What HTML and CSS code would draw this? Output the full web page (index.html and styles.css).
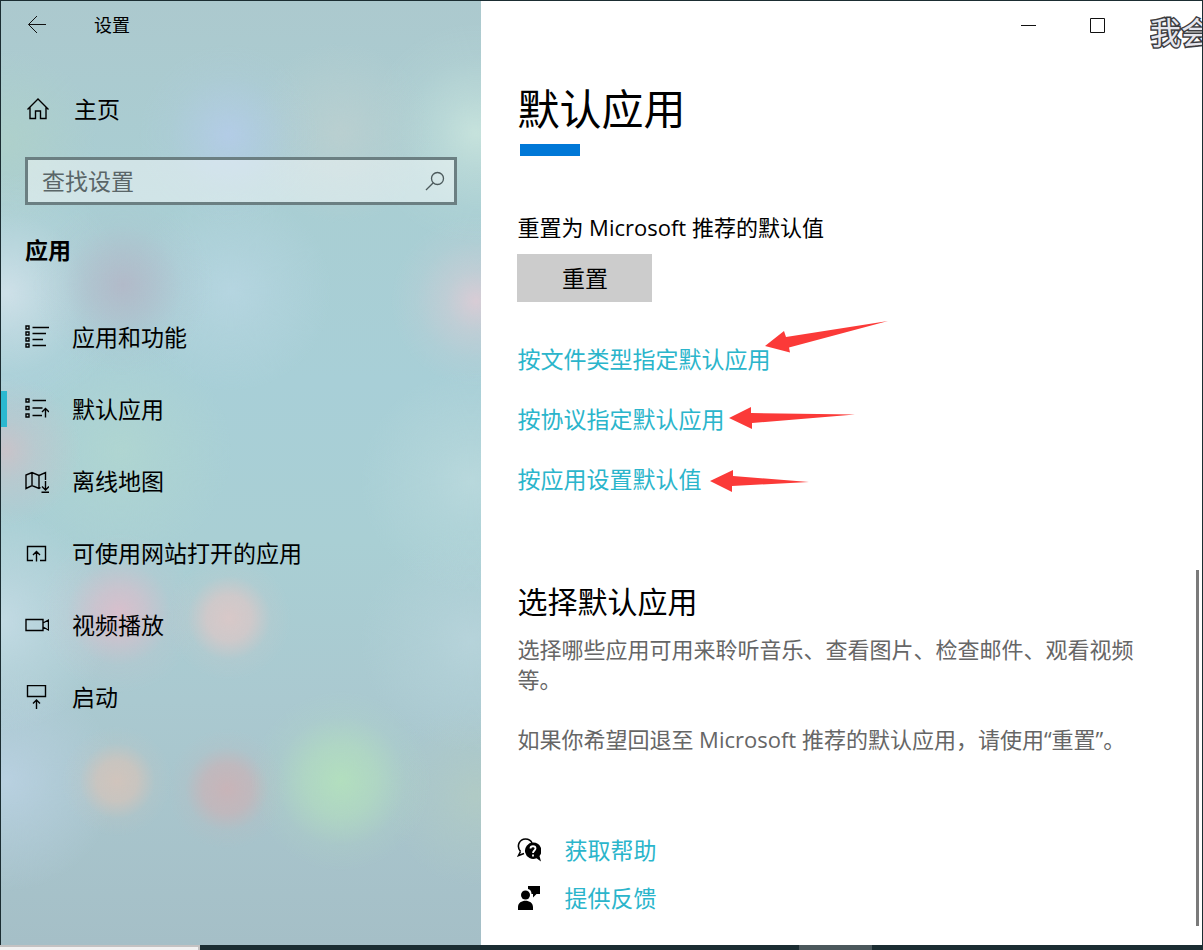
FILE: index.html
```html
<!DOCTYPE html>
<html lang="zh-CN">

<head>
    <meta charset="UTF-8">
    <meta name="viewport" content="width=device-width, initial-scale=1.0">
    <title>设置</title>
    <link rel="stylesheet" href="styles.css">
</head>

<body>
    <div class="window">
        <aside class="sidebar">
            <header class="caption">
                <button class="back" type="button" aria-label="返回">
                    <svg width="20" height="20" viewBox="0 0 20 20"><path d="M19 9.500H1.500M10 1L1.500 9.500L10 18"/></svg>
                </button>
                <span class="app-name">设置</span>
            </header>

            <a class="home" href="#">
                <svg class="icon" width="24" height="24" viewBox="0 0 24 24"><path d="M1.500 12.500L12 2L22.500 12.500M4 10.500V21.500H9.500V14H14.500V21.500H20V10.500"/></svg>
                主页
            </a>

            <form class="search">
                <input type="text" id="searchInput" aria-label="查找设置" placeholder="查找设置">
                <button type="button" aria-label="搜索">
                    <svg width="20" height="20" viewBox="0 0 20 20"><circle cx="12.500" cy="7.500" r="6"/><path d="M8.300 11.700L1 19"/></svg>
                </button>
            </form>

            <h2 class="group-title">应用</h2>

            <nav>
                <ul class="nav-list">
                    <li><a href="#">
                        <svg class="icon" width="24" height="24" viewBox="0 0 24 24"><path d="M1 1h3v3h-3zM1 7h3v3h-3zM1 13h3v3h-3zM1 19h3v3h-3zM7.500 2.500H24M7.500 8.500H21M7.500 14.500H18M7.500 20.500H21"/></svg>
                        应用和功能</a></li>
                    <li><a class="active" href="#">
                        <svg class="icon" width="24" height="24" viewBox="0 0 24 24"><path d="M1 2h3v3h-3zM1 9.500h3v3h-3zM1 17h3v3h-3zM7.500 3.500H21M7.500 11H17.500M7.500 18.500H17M20.500 20.500V11.500M17 15L20.500 11.500L24 15"/></svg>
                        默认应用</a></li>
                    <li><a href="#">
                        <svg class="icon" width="24" height="24" viewBox="0 0 24 24"><path d="M15.500 18.500L14 19.500L7 16.500L1 19.500V6L7 3.500L14 6.500L20.500 3.500V11M7 3.500V16.500M14 6.500V19.500M20.500 12V20.500M17 17.500L20.500 21L24 17.500M16.500 23.300H24"/></svg>
                        离线地图</a></li>
                    <li><a href="#">
                        <svg class="icon" width="24" height="24" viewBox="0 0 24 24"><path d="M8 19.500H2.500V5.500H20.500V19.500H15M11.500 20.500V10.500M8 14L11.500 10.500L15 14"/></svg>
                        可使用网站打开的应用</a></li>
                    <li><a href="#">
                        <svg class="icon" width="24" height="24" viewBox="0 0 24 24"><path d="M1 6.500H18V17.500H1zM18 10L23.500 7V17L18 14"/></svg>
                        视频播放</a></li>
                    <li><a href="#">
                        <svg class="icon" width="24" height="24" viewBox="0 0 24 24"><path d="M2.500 0.500H20.500V11.500H2.500zM11.500 24V15M8 18.500L11.500 15L15 18.500"/></svg>
                        启动</a></li>
                </ul>
            </nav>
        </aside>

        <main class="content">
            <div class="window-buttons">
                <button type="button" aria-label="最小化">
                    <svg width="16" height="16" viewBox="0 0 16 16"><path d="M0 8.500H15"/></svg>
                </button>
                <button type="button" aria-label="最大化">
                    <svg width="16" height="16" viewBox="0 0 16 16"><path d="M.500 1.500H14.500V15.500H.500z"/></svg>
                </button>
                <button type="button" aria-label="关闭"></button>
            </div>

            <h1>默认应用</h1>
            <div class="title-bar"></div>

            <section class="reset">
                <p>重置为 Microsoft 推荐的默认值</p>
                <button type="button">重置</button>
            </section>

            <ul class="links">
                <li>
                    <a href="#">按文件类型指定默认应用</a>
                    <svg class="arrow arrow-type" width="124" height="32" viewBox="0 0 124 32"><path d="M0 25L19 10L21 16L123 0L24 26.500L25 31.500z"/></svg>
                </li>
                <li>
                    <a href="#">按协议指定默认应用</a>
                    <svg class="arrow arrow-protocol" width="126" height="22" viewBox="0 0 126 22"><path d="M0 11L22 0V6L126 7.500L23 16V22z"/></svg>
                </li>
                <li>
                    <a href="#">按应用设置默认值</a>
                    <svg class="arrow arrow-app" width="100" height="22" viewBox="0 0 100 22"><path d="M0 11L23 0V6L99 12L22 16V22z"/></svg>
                </li>
            </ul>

            <section class="choose">
                <h2>选择默认应用</h2>
                <p>选择哪些应用可用来聆听音乐、查看图片、检查邮件、观看视频等。</p>
                <p>如果你希望回退至 Microsoft 推荐的默认应用，请使用“重置”。</p>
            </section>

            <ul class="support">
                <li>
                    <svg width="24" height="24" viewBox="0 0 24 24">
                        <path class="line" d="M3.500 13.500C-1 8 2.500 1 8.500 1C11.500 1 14 2.500 15 5M3.500 13.500L1.500 17.500L7 15.500"/>
                        <path d="M16 4.500A8.200 8.200 0 1 0 19.500 20.200L24 23.500L22.500 18A8.200 8.200 0 0 0 16 4.500z"/>
                        <path class="mark" d="M13.500 10.500C13.500 7.500 18.500 7.500 18.500 10.500C18.500 12.500 16 12.500 16 15M16 16.500V18.500"/>
                    </svg>
                    <a href="#">获取帮助</a>
                </li>
                <li>
                    <svg width="24" height="24" viewBox="0 0 24 24">
                        <circle cx="8.500" cy="9" r="4.500"/>
                        <path d="M1 24V21C1 12.500 16 12.500 16 21V24zM11 0H23V8H19.500L16 11.500V8H14.500C14.500 5 13 3.500 11 3z"/>
                    </svg>
                    <a href="#">提供反馈</a>
                </li>
            </ul>

            <div class="scrollbar"></div>
        </main>
        <div class="watermark">我会</div>
    </div>

    <footer class="taskbar">
        <div class="task-light"></div>
        <div class="task-active"></div>
    </footer>
</body>

</html>
```
FILE: styles.css
```css
* {
    box-sizing: border-box;
}

body {
    margin: 0;
    min-height: 100vh;
    display: flex;
    flex-direction: column;
    background-color: #1b2d32;
    font-family: "Open Sans", "Noto Sans CJK SC", sans-serif;
    font-size: 23px;
    line-height: 30px;
    color: #000000;
    overflow-x: hidden;
}

h1,
h2,
p,
ul {
    margin: 0;
    padding: 0;
    font-weight: normal;
}

ul {
    list-style: none;
}

a {
    color: #2bb5cb;
    text-decoration: none;
}

button {
    padding: 0;
    border: none;
    background: none;
    font: inherit;
    color: inherit;
}

svg {
    display: block;
    flex-shrink: 0;
}

.window {
    position: relative;
    flex: 1;
    display: flex;
    margin: 1px 1px 0;
    background-color: #ffffff;
}

/* sidebar */
.sidebar {
    flex: 0 0 40%;
    background:
        radial-gradient(circle at 340px 780px, #b3e0bdee 0, #b3e0bd99 35px, #b3e0bd22 65px, #b3e0bd00 90px),
        radial-gradient(circle at 116px 780px, #d0c4bcff 0, #d0c4bccc 20px, #d0c4bc22 38px, #d0c4bc00 55px),
        radial-gradient(circle at 226px 788px, #c8b4b8ff 0, #c8b4b8bb 24px, #c8b4b822 42px, #c8b4b800 60px),
        radial-gradient(circle at 228px 617px, #d8c8c8ff 0, #d8c8c8cc 22px, #d8c8c822 42px, #d8c8c800 62px),
        radial-gradient(circle at 118px 612px, #d8bfccff 0, #d8bfccaa 25px, #d8bfcc22 52px, #d8bfcc00 80px),
        radial-gradient(circle at 228px 134px, #b3cce6ff 0, #b3cce688 30px, #b3cce622 60px, #b3cce600 90px),
        radial-gradient(circle at 340px 132px, #b9cfd0ff 0, #b9cfd099 35px, #b9cfd000 90px),
        radial-gradient(circle at 475px 132px, #c6e2dcff 0, #c6e2dc88 35px, #c6e2dc22 75px, #c6e2dc00 110px),
        radial-gradient(circle at 475px 300px, #d8ccd5ff 0, #d8ccd577 30px, #d8ccd522 60px, #d8ccd500 85px),
        radial-gradient(circle at 122px 284px, #b2bac9ff 0, #b2bac999 30px, #b2bac922 60px, #b2bac900 90px),
        radial-gradient(circle at 230px 290px, #b5d5e0ff 0, #b5d5e088 40px, #b5d5e000 100px),
        radial-gradient(circle at 5px 292px, #cee0e8ff 0, #cee0e888 40px, #cee0e822 80px, #cee0e800 120px),
        radial-gradient(circle at 5px 450px, #c8c3c9ff 0, #c8c3c977 30px, #c8c3c900 75px),
        radial-gradient(circle at 120px 450px, #afd5d1ff 0, #afd5d188 45px, #afd5d100 110px),
        radial-gradient(circle at 5px 140px, #aed0cbff 0, #aed0cb00 90px),
        radial-gradient(circle at 0 620px, #c2dae3ff 0, #c2dae388 45px, #c2dae300 110px),
        radial-gradient(circle at 5px 780px, #b8d0e0ff 0, #b8d0e088 45px, #b8d0e000 110px),
        radial-gradient(circle at 470px 480px, #b8d8dcff 0, #b8d8dc88 40px, #b8d8dc00 110px),
        radial-gradient(circle at 470px 640px, #b6d3daff 0, #b6d3da88 40px, #b6d3da00 110px),
        radial-gradient(circle at 475px 795px, #b0cac5ff 0, #b0cac588 35px, #b0cac500 90px),
        linear-gradient(#acc9ce 0, #a9ced3 200px, #a8cfd7 380px, #a9cfd4 540px, #aac9d0 700px, #a5bfc7 100%);
}

.caption {
    display: flex;
    align-items: center;
    height: 48px;
}

.back {
    width: 72px;
    height: 48px;
    display: flex;
    align-items: center;
    justify-content: center;
}

.caption svg,
.window-buttons svg {
    fill: none;
    stroke: #111111;
    stroke-width: 1;
}

.app-name {
    margin-left: 21px;
    font-size: 18px;
}

.home {
    display: flex;
    align-items: center;
    gap: 24px;
    height: 72px;
    margin: 24px 0 12px;
    padding: 0 25px;
    color: #000000;
}

.icon {
    fill: none;
    stroke: #000000;
    stroke-width: 1.4;
}

.search {
    display: flex;
    align-items: center;
    height: 48px;
    margin: 0 24px;
    border: 3px solid #6b7f82;
    background-color: rgba(255, 255, 255, 0.45);
}

.search input {
    flex: 1;
    min-width: 0;
    height: 42px;
    padding: 0 14px;
    border: none;
    outline: none;
    background: none;
    font: inherit;
}

.search input::placeholder {
    color: #5a6668;
}

.search button {
    padding-right: 9px;
}

.search svg {
    fill: none;
    stroke: #4c5a5c;
    stroke-width: 1.3;
}

.group-title {
    margin: 30px 24px 36px;
    font-size: 23px;
    font-weight: bold;
}

.nav-list a {
    position: relative;
    display: flex;
    align-items: center;
    gap: 23px;
    height: 72px;
    padding: 0 24px;
    color: #000000;
}

.nav-list .active::before {
    content: "";
    position: absolute;
    left: 0;
    width: 6px;
    height: 36px;
    background-color: #2bb8d0;
}

/* content */
.content {
    position: relative;
    flex: 1;
    min-width: 0;
    padding: 0 36px;
}

.window-buttons {
    display: flex;
    justify-content: flex-end;
    height: 48px;
    margin-right: -35px;
}

.window-buttons button {
    width: 69px;
    display: flex;
    align-items: center;
    justify-content: center;
}

h1 {
    margin-top: 32px;
    font-size: 42px;
    line-height: 56px;
}

.title-bar {
    width: 60px;
    height: 12px;
    margin: 7px 3px 0;
    background-color: #0078d7;
}

.reset {
    margin-top: 56px;
}

.reset p {
    font-size: 22px;
}

.reset button {
    display: block;
    width: 135px;
    height: 48px;
    margin-top: 12px;
    background-color: #cccccc;
}

.links {
    display: flex;
    flex-direction: column;
    align-items: flex-start;
    gap: 30px;
    margin-top: 42px;
}

.links li {
    position: relative;
}

/* red pointers drawn over the page */
.arrow {
    position: absolute;
    top: 3px;
    left: 100%;
    margin-left: 9px;
    fill: #fb3a38;
}

.arrow-type {
    top: -23px;
    margin-left: -5px;
}

.arrow-protocol {
    margin-left: 5px;
}

.arrow-app {
    top: 6px;
}

.choose {
    margin-top: 88px;
    color: #666666;
    font-size: 22px;
}

.choose h2 {
    margin-bottom: 12px;
    font-size: 30px;
    line-height: 40px;
    color: #000000;
}

.choose p + p {
    margin-top: 30px;
}

.support {
    margin-top: 72px;
}

.support li {
    display: flex;
    align-items: center;
    gap: 23px;
    height: 48px;
}

.support .line {
    fill: none;
    stroke: #000000;
    stroke-width: 1.6;
}

.support .mark {
    fill: none;
    stroke: #ffffff;
    stroke-width: 1.8;
}

.scrollbar {
    position: absolute;
    right: 3px;
    bottom: 19px;
    width: 3px;
    height: 356px;
    background-color: #7a7a7a;
}

.watermark {
    position: absolute;
    top: 11px;
    right: 0;
    width: 52px;
    overflow: hidden;
    white-space: nowrap;
    font-size: 31px;
    line-height: 40px;
    color: #e6e6ee;
    -webkit-text-stroke: 3px #3c3c40;
    paint-order: stroke fill;
}

/* strip of the desktop taskbar */
.taskbar {
    display: flex;
    height: 5px;
}

.task-light {
    width: 200px;
    border-top: 2px solid #c4c2c2;
    border-right: 2px solid #c4c2c2;
    background-color: #f2f2f2;
}

.task-active {
    width: 73px;
    margin-left: calc(50% - 3px);
    background-color: #4b585c;
}
```
